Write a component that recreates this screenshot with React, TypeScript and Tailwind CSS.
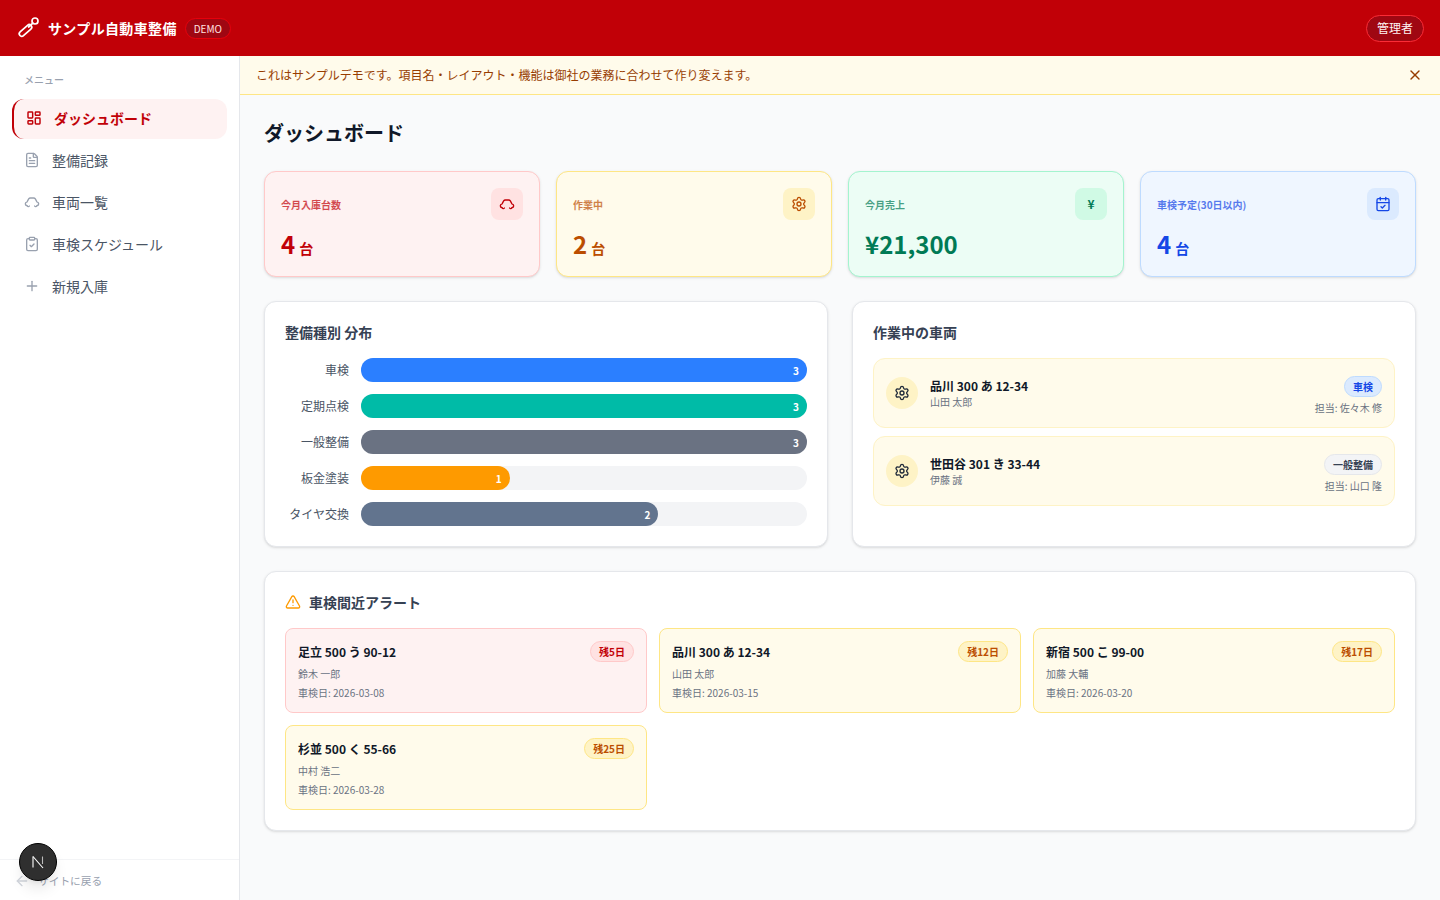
import { ArrowLeft, CalendarCheck, ClipboardCheck, FileText, LayoutDashboard, Plus, Settings, TriangleAlert, X } from "lucide-react";

const FONT = { fontFamily: '"Noto Sans CJK JP", "Noto Sans", sans-serif' };

function CarIcon({ className }: { className?: string }) {
  return (
    <svg className={className} viewBox="0 0 24 24" fill="none" stroke="currentColor" strokeWidth={2} strokeLinecap="round" strokeLinejoin="round">
      <path d="M4.5 17.5A2.8 2.8 0 0 1 2 14.8c0-1.5 1-2.7 2.6-3L7 7.4A3 3 0 0 1 9.6 6h4.8a3 3 0 0 1 2.6 1.4l2.4 4.4c1.6.3 2.6 1.5 2.6 3a2.8 2.8 0 0 1-2.5 2.7" />
      <path d="M4.5 17.5a2 2 0 0 0 3.6.5" />
      <path d="M19.5 17.5a2 2 0 0 1-3.6.5" />
    </svg>
  );
}

function WrenchIcon({ className }: { className?: string }) {
  return (
    <svg className={className} viewBox="0 0 24 24" fill="none" stroke="currentColor" strokeWidth={1.7} strokeLinecap="round" strokeLinejoin="round">
      <circle cx="19" cy="5" r="3" />
      <path d="M16.8 7.2 12.6 11" />
      <rect x="2" y="12" width="15" height="5" rx="2.5" transform="rotate(-42 9.5 14.5)" />
    </svg>
  );
}

function NextLogo() {
  return (
    <svg className="h-4 w-4" viewBox="0 0 16 16" fill="none" stroke="white" strokeWidth={1.1}>
      <path d="M3 2.5V13.5" />
      <path d="M3 2.5 13 14" />
      <path d="M12.5 2.5V10" stroke="#bbbbbb" />
    </svg>
  );
}

const nav = [
  { label: "整備記録", Icon: FileText },
  { label: "車両一覧", Icon: CarIcon },
  { label: "車検スケジュール", Icon: ClipboardCheck },
  { label: "新規入庫", Icon: Plus },
];

const stats = [
  { label: "今月入庫台数", value: "4", unit: "台", card: "bg-red-50 border-red-200", valueC: "text-red-700", iconC: "bg-red-100 text-red-700", icon: <CarIcon className="h-4 w-4" /> },
  { label: "作業中", value: "2", unit: "台", card: "bg-amber-50 border-amber-200", valueC: "text-amber-700", iconC: "bg-amber-100 text-amber-700", icon: <Settings className="h-4 w-4" /> },
  { label: "今月売上", value: "¥21,300", unit: "", card: "bg-emerald-50 border-emerald-200", valueC: "text-emerald-700", iconC: "bg-emerald-100 text-emerald-700", icon: <span className="text-xs font-bold">¥</span> },
  { label: "車検予定(30日以内)", value: "4", unit: "台", card: "bg-blue-50 border-blue-200", valueC: "text-blue-700", iconC: "bg-blue-100 text-blue-700", icon: <CalendarCheck className="h-4 w-4" /> },
];

const bars = [
  { label: "車検", n: 3, c: "bg-[#2b7fff]" },
  { label: "定期点検", n: 3, c: "bg-[#00bba7]" },
  { label: "一般整備", n: 3, c: "bg-[#6a7282]" },
  { label: "板金塗装", n: 1, c: "bg-[#fe9a00]" },
  { label: "タイヤ交換", n: 2, c: "bg-[#62748e]" },
];

const working = [
  { plate: "品川 300 あ 12-34", owner: "山田 太郎", tag: "車検", tagC: "bg-blue-100 border-blue-200 text-blue-700", staff: "担当: 佐々木 修" },
  { plate: "世田谷 301 き 33-44", owner: "伊藤 誠", tag: "一般整備", tagC: "bg-gray-100 border-gray-200 text-gray-700", staff: "担当: 山口 隆" },
];

const alerts = [
  { plate: "足立 500 う 90-12", owner: "鈴木 一郎", date: "車検日: 2026-03-08", left: "残5日", urgent: true },
  { plate: "品川 300 あ 12-34", owner: "山田 太郎", date: "車検日: 2026-03-15", left: "残12日", urgent: false },
  { plate: "新宿 500 こ 99-00", owner: "加藤 大輔", date: "車検日: 2026-03-20", left: "残17日", urgent: false },
  { plate: "杉並 500 く 55-66", owner: "中村 浩二", date: "車検日: 2026-03-28", left: "残25日", urgent: false },
];

export default function App() {
  return (
    <div style={FONT} className="relative flex h-[900px] w-[1440px] flex-col overflow-hidden bg-gray-50 text-gray-900">
      <header className="flex h-14 shrink-0 items-center justify-between bg-[#c10007] px-4 text-white">
        <div className="flex items-center gap-2">
          <WrenchIcon className="h-6 w-6" />
          <span className="text-sm font-bold tracking-wide">サンプル自動車整備</span>
          <span className="rounded-full border border-red-600 bg-red-800 px-2 py-0.5 text-[10px] leading-[15px] text-red-100">DEMO</span>
        </div>
        <button className="rounded-full border border-red-500 bg-red-800 px-2.5 pt-[3px] pb-[5px] text-xs leading-[17px] text-red-50">管理者</button>
      </header>

      <div className="flex min-h-0 flex-1">
        <aside className="flex w-60 shrink-0 flex-col border-r border-gray-200 bg-white">
          <div className="flex-1 px-3 pt-[15px]">
            <p className="mb-[11px] px-3 text-[10px] leading-[17px] font-medium text-gray-400">メニュー</p>
            <div className="flex flex-col gap-0.5">
              <a className="flex h-10 items-center gap-3 rounded-xl border-l-2 border-red-700 bg-red-50 px-3 pb-[2px] text-sm font-bold text-red-700">
                <LayoutDashboard className="h-4 w-4" strokeWidth={2.2} />
                ダッシュボード
              </a>
              {nav.map(({ label, Icon }) => (
                <a key={label} className="flex h-10 items-center gap-3 rounded-xl px-3 pb-[2px] text-sm text-gray-600">
                  <Icon className="h-4 w-4 text-gray-400" />
                  {label}
                </a>
              ))}
            </div>
          </div>
          <div className="flex h-[41px] items-center gap-2 border-t border-gray-100 px-3.5 pt-[2px] text-[10.7px] text-gray-400">
            <ArrowLeft className="h-4 w-4 text-gray-300" />
            サイトに戻る
          </div>
        </aside>

        <div className="min-w-0 flex-1">
          <div className="flex h-[39px] items-center justify-between border-b border-amber-200 bg-amber-50 pr-[17px] pl-4 text-xs text-amber-800">
            <span>これはサンプルデモです。項目名・レイアウト・機能は御社の業務に合わせて作り変えます。</span>
            <X className="h-4 w-4" />
          </div>

          <main className="flex flex-col p-6">
            <h1 className="mb-6 text-xl leading-7 font-bold">ダッシュボード</h1>

            <div className="mb-6 grid grid-cols-4 gap-4">
              {stats.map((s) => (
                <div key={s.label} className={`h-[106px] rounded-xl border p-4 shadow-sm ${s.card}`}>
                  <div className="flex h-8 items-center justify-between">
                    <span className={`text-[10px] font-semibold opacity-70 ${s.valueC}`}>{s.label}</span>
                    <span className={`flex h-8 w-8 items-center justify-center rounded-lg ${s.iconC}`}>{s.icon}</span>
                  </div>
                  <div className={`mt-2 text-2xl leading-8 font-bold ${s.valueC}`}>
                    {s.value}
                    {s.unit && <span className="ml-1 text-sm">{s.unit}</span>}
                  </div>
                </div>
              ))}
            </div>

            <div className="mb-6 grid grid-cols-2 gap-6">
              <section className="rounded-xl border border-gray-200 bg-white p-5 shadow-sm">
                <h2 className="mb-4 text-sm leading-5 font-bold text-gray-700">整備種別 分布</h2>
                <div className="flex flex-col gap-3">
                  {bars.map((b) => (
                    <div key={b.label} className="flex items-center gap-3">
                      <span className="w-16 shrink-0 text-right text-xs whitespace-nowrap text-gray-600">{b.label}</span>
                      <div className="h-6 flex-1 rounded-full bg-gray-100">
                        <div className={`flex h-6 items-center justify-end rounded-full pr-2 text-[10px] font-bold text-white ${b.c}`} style={{ width: `${(b.n / 3) * 100}%` }}>
                          {b.n}
                        </div>
                      </div>
                    </div>
                  ))}
                </div>
              </section>

              <section className="rounded-xl border border-gray-200 bg-white p-5 shadow-sm">
                <h2 className="mb-4 text-sm leading-5 font-bold text-gray-700">作業中の車両</h2>
                <div className="flex flex-col gap-2">
                  {working.map((w) => (
                    <div key={w.plate} className="flex h-[70px] items-center justify-between rounded-xl border border-amber-100 bg-amber-50 px-3">
                      <div className="flex items-center gap-3">
                        <span className="flex h-8 w-8 items-center justify-center rounded-full bg-amber-100 text-gray-800">
                          <Settings className="h-4 w-4" />
                        </span>
                        <div>
                          <p className="text-xs leading-4 font-bold">{w.plate}</p>
                          <p className="text-[10px] leading-[15px] text-gray-500">{w.owner}</p>
                        </div>
                      </div>
                      <div className="flex flex-col items-end gap-[3px] pt-1">
                        <span className={`rounded-full border px-2 py-0.5 text-[10px] leading-[15px] font-bold ${w.tagC}`}>{w.tag}</span>
                        <span className="text-[10px] leading-[15px] text-gray-500">{w.staff}</span>
                      </div>
                    </div>
                  ))}
                </div>
              </section>
            </div>

            <section className="rounded-xl border border-gray-200 bg-white p-5 shadow-sm">
              <h2 className="mb-4 flex items-center gap-2 text-sm leading-5 font-bold text-gray-700">
                <TriangleAlert className="h-4 w-4 text-amber-500" />
                車検間近アラート
              </h2>
              <div className="grid grid-cols-3 gap-3">
                {alerts.map((a) => (
                  <div key={a.plate} className={`h-[85px] rounded-lg border px-3 pt-3 ${a.urgent ? "border-red-200 bg-red-50" : "border-amber-200 bg-amber-50"}`}>
                    <div className="flex items-center justify-between">
                      <span className="text-xs font-bold">{a.plate}</span>
                      <span className={`rounded-full border px-2 py-0.5 text-[10px] leading-[15px] font-bold ${a.urgent ? "border-red-200 bg-red-100 text-red-700" : "border-amber-200 bg-amber-100 text-amber-700"}`}>{a.left}</span>
                    </div>
                    <p className="mt-1 text-[10px] leading-[15px] text-gray-500">{a.owner}</p>
                    <p className="mt-1 text-[10px] leading-[15px] text-gray-500">{a.date}</p>
                  </div>
                ))}
              </div>
            </section>
          </main>
        </div>
      </div>

      <div className="absolute top-[843px] left-[19px] flex h-[38px] w-[38px] items-center justify-center rounded-full border border-black bg-[#2f2f2f] shadow-lg">
        <NextLogo />
      </div>
    </div>
  );
}
